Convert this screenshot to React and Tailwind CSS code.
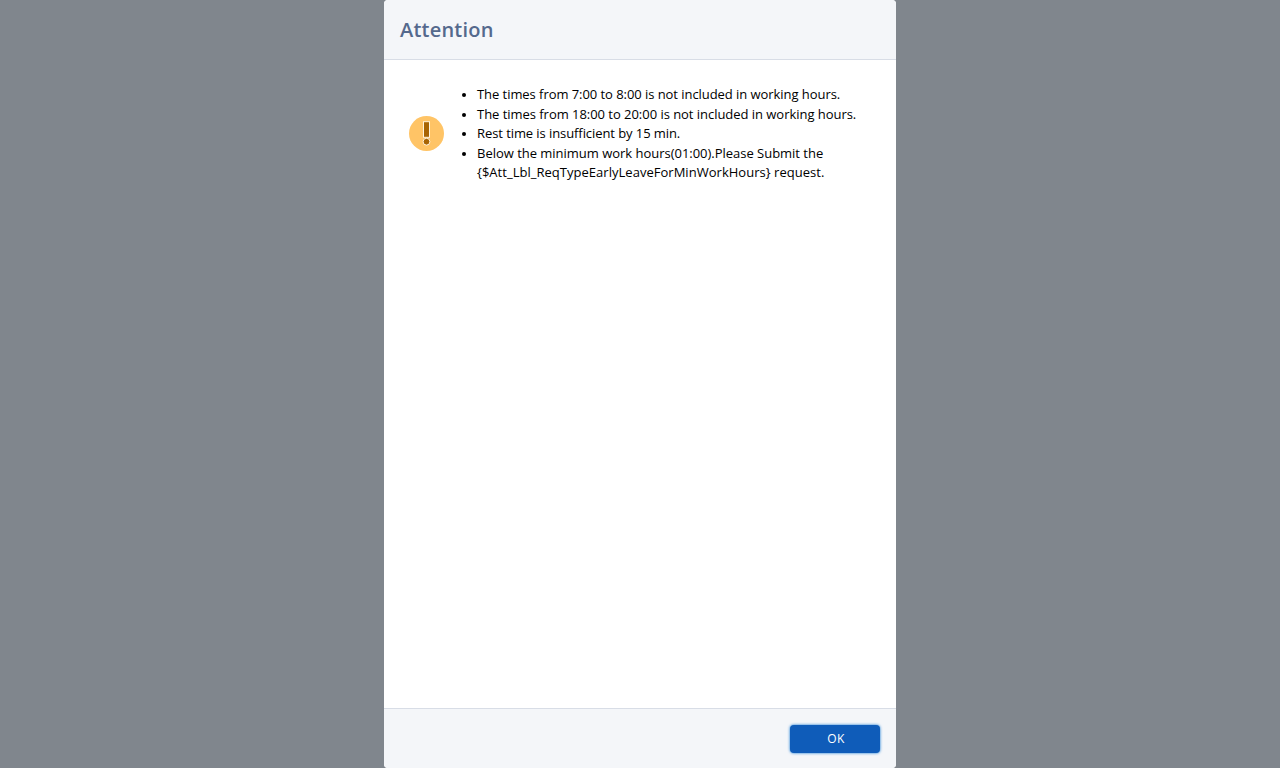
const messages = [
  [{ text: "The times from 7:00 to 8:00 is not included in working hours.", tracking: "tracking-[-0.056px]" }],
  [{ text: "The times from 18:00 to 20:00 is not included in working hours.", tracking: "tracking-[-0.035px]" }],
  [{ text: "Rest time is insufficient by 15 min.", tracking: "tracking-[-0.08px]" }],
  [
    { text: "Below the minimum work hours(01:00).Please Submit the", tracking: "tracking-[-0.02px]" },
    { text: "{$Att_Lbl_ReqTypeEarlyLeaveForMinWorkHours} request.", tracking: "tracking-[0.025px]" },
  ],
];

function WarningIcon() {
  return (
    <svg className="size-[35px] shrink-0" viewBox="0 0 35 35" aria-hidden="true">
      <circle cx="17.5" cy="17.5" r="17.5" fill="#ffc466" />
      <rect x="14.5" y="5.7" width="6" height="15.6" fill="#a86403" stroke="#fff3dc" strokeWidth="1" />
      <circle cx="17.5" cy="25.7" r="3.4" fill="#a86403" stroke="#fff3dc" strokeWidth="1" />
    </svg>
  );
}

export default function App() {
  return (
    <div className="flex h-screen justify-center bg-[#80868d] font-['Open_Sans',sans-serif]">
      <section role="dialog" className="flex w-[512px] flex-col overflow-hidden rounded bg-white">
        <header className="flex h-[60px] shrink-0 items-center border-b border-[#d8dde6] bg-[#f4f6f9] px-4">
          <h1 className="text-[20px] leading-[25px] font-semibold tracking-[0.22px] text-[#54698d]">Attention</h1>
        </header>
        <main className="flex flex-1 items-start pt-[25px] pl-[25px]">
          <div className="flex items-center">
            <WarningIcon />
            <ul className="ml-[33px] list-disc text-[13px] leading-[19.5px] whitespace-nowrap text-black marker:text-[11px]">
              {messages.map((lines) => (
                <li key={lines[0].text}>
                  {lines.map((line) => (
                    <span key={line.text} className={line.tracking}>
                      {line.text}
                      <br />
                    </span>
                  ))}
                </li>
              ))}
            </ul>
          </div>
        </main>
        <footer className="flex h-[60px] shrink-0 items-center justify-end border-t border-[#d8dde6] bg-[#f4f6f9] px-4">
          <button className="h-7 w-[90px] rounded bg-[#0f5cb9] pt-px pl-[2px] text-[12px] tracking-[0.4px] text-white shadow-[0_0_3px_#0070d2]">OK</button>
        </footer>
      </section>
    </div>
  );
}
